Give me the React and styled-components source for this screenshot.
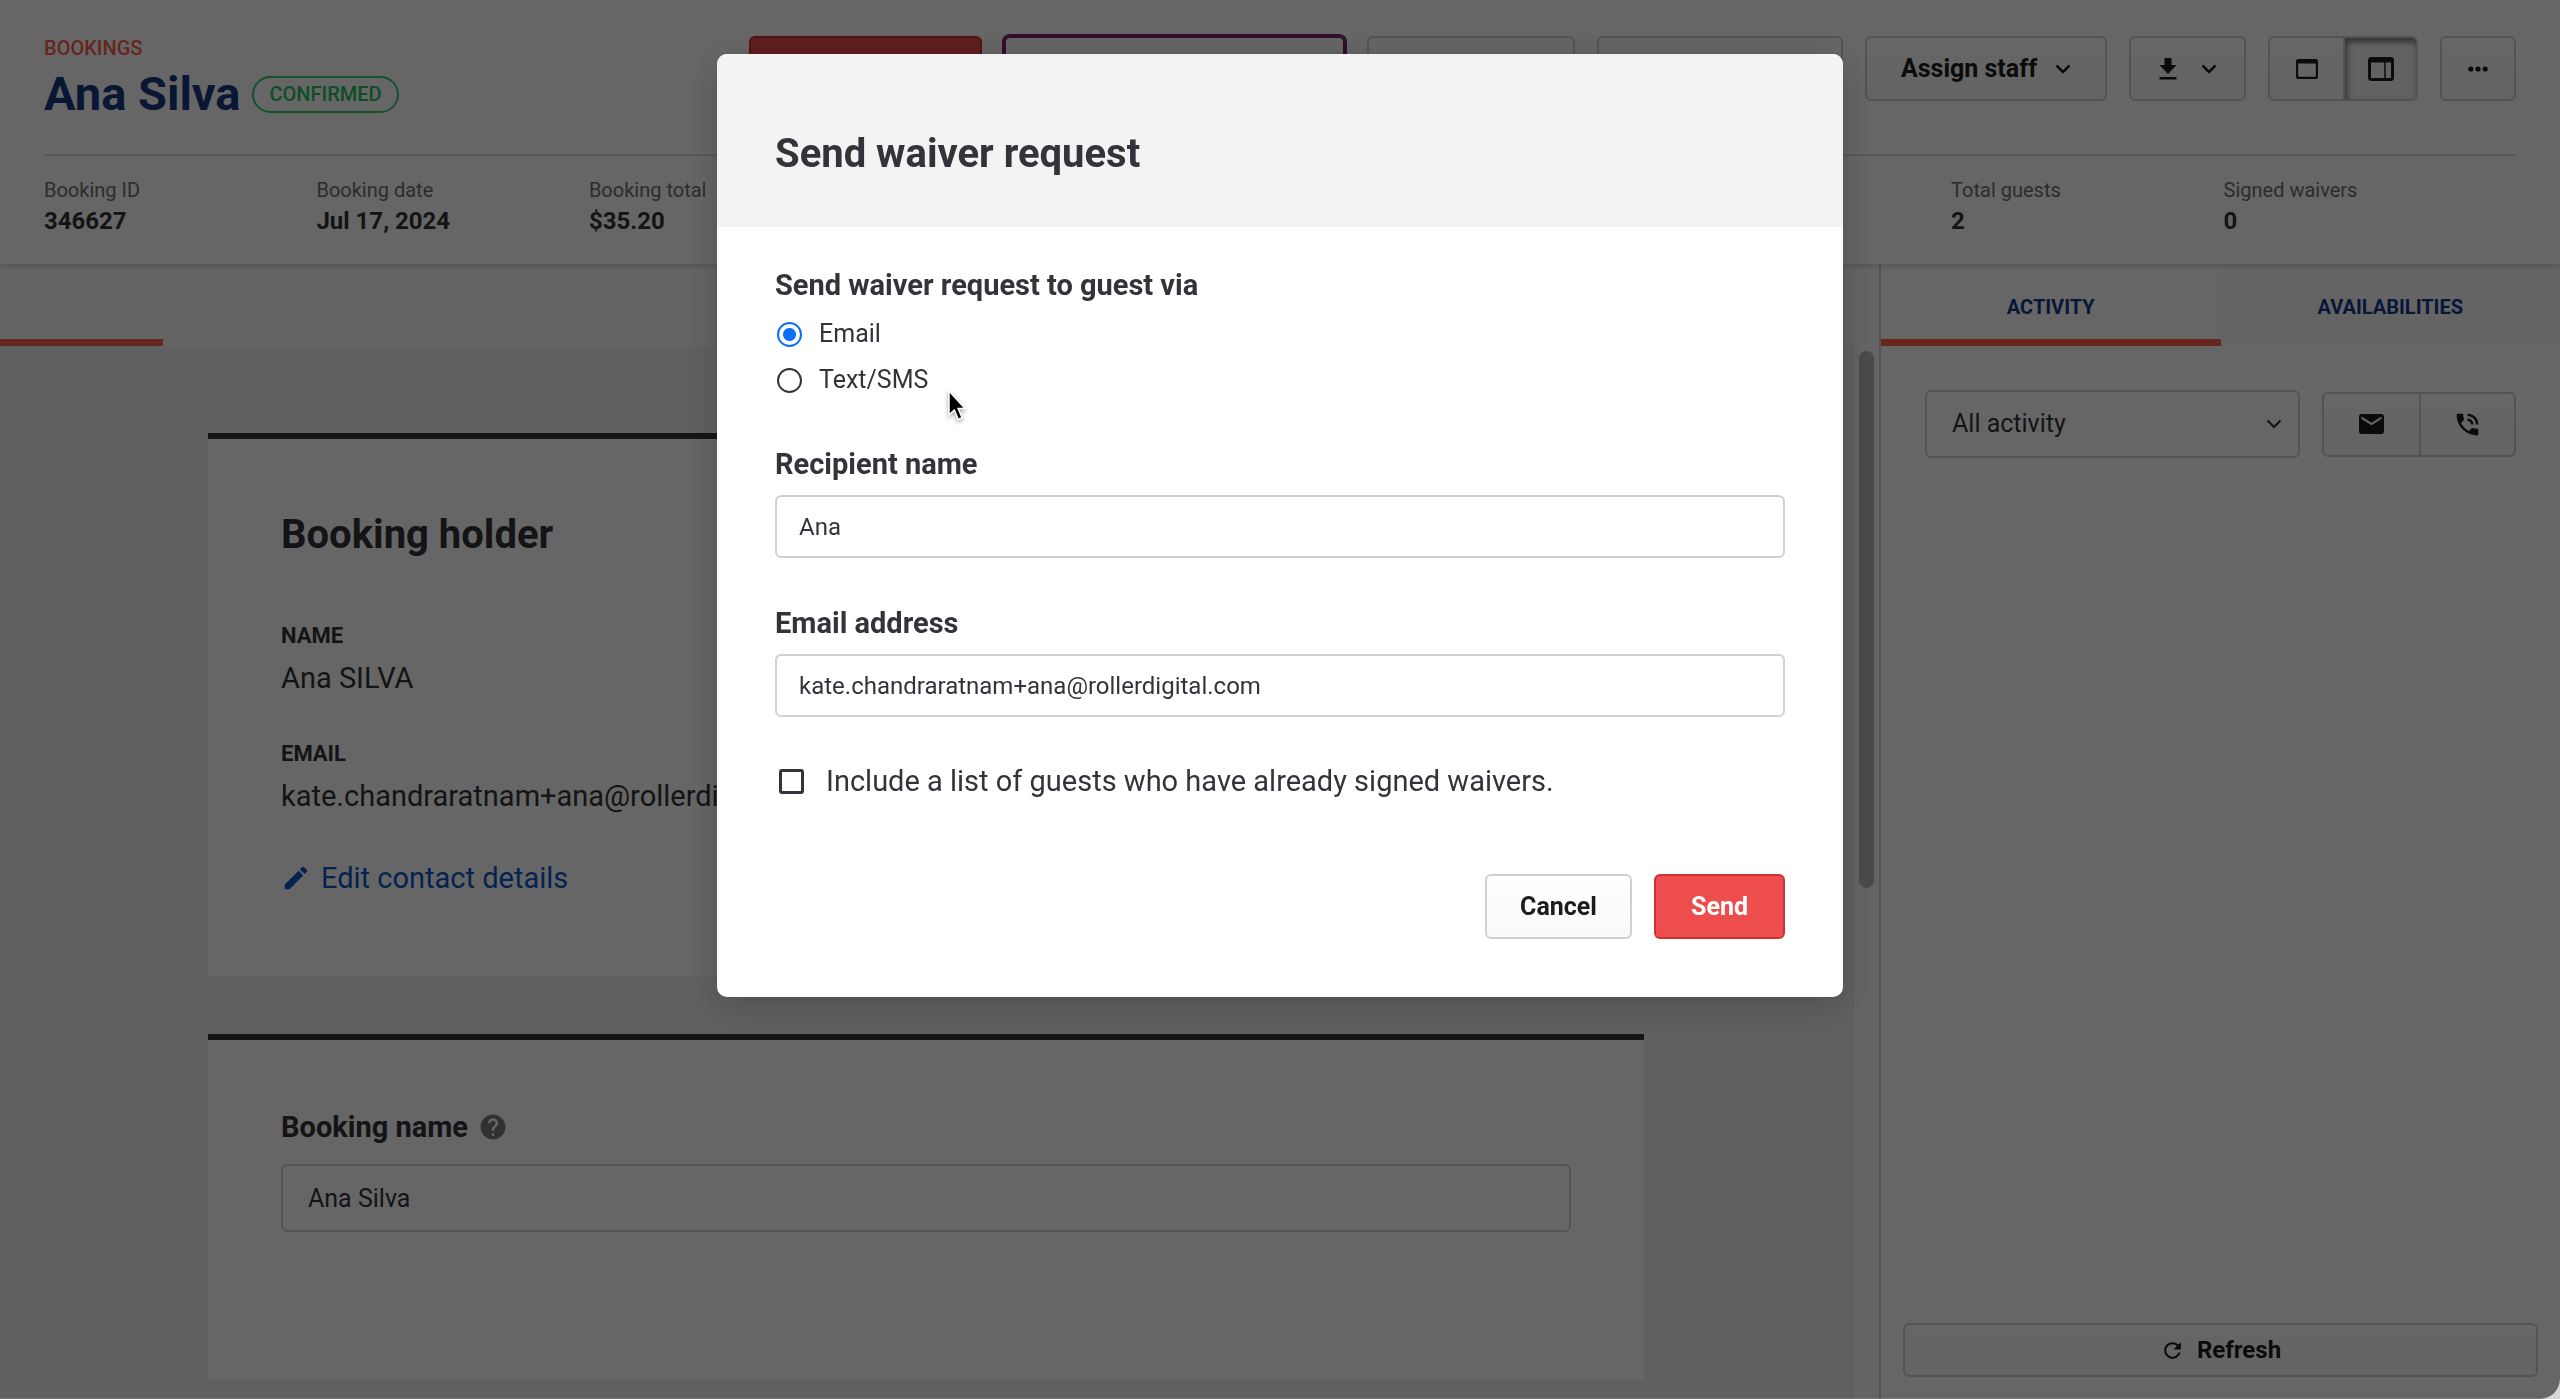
import React from "react";
import styled, { createGlobalStyle, css } from "styled-components";

const Global = createGlobalStyle`
  *, *::before, *::after { box-sizing: border-box; }
  html, body, #root { height: 100%; }
  body {
    margin: 0;
    background: #d6d6d6;
    color: #333439;
    font-family: Roboto, "Liberation Sans", sans-serif;
    font-size: 25px;
    line-height: 34px;
    overflow: hidden;
  }
  h1, h2, p, dl, dt, dd { margin: 0; }
  button, input, select { font: inherit; color: inherit; }
`;

const Page = styled.div`
  display: flex;
  flex-direction: column;
  height: 100vh;
  background: #fff;
  border-radius: 0 0 20px 0;
  overflow: hidden;
`;

/* Header */

const Header = styled.header`
  flex: none;
  padding: 36px 44px 0;
  height: 264px;
  background: #fff;
  box-shadow: 0 2px 6px rgba(0, 0, 0, 0.18);
  z-index: 1;
`;

const TitleRow = styled.div`
  display: flex;
  justify-content: space-between;
  align-items: flex-start;
  height: 120px;
  border-bottom: 2px solid #e0e0e0;
`;

const Crumb = styled.a`
  display: block;
  font-size: 20px;
  line-height: 24px;
  font-weight: 500;
  color: #ff5d4b;
  text-decoration: none;
`;

const NameLine = styled.div`
  display: flex;
  align-items: center;
  gap: 12px;
`;

const GuestName = styled.h1`
  font-size: 47px;
  line-height: 68px;
  font-weight: 700;
  color: #173a82;
`;

const StatusPill = styled.span`
  height: 37px;
  padding: 0 15px;
  border: 2px solid #2ecc71;
  border-radius: 19px;
  font-size: 20px;
  line-height: 33px;
  font-weight: 500;
  color: #25c165;
`;

const Toolbar = styled.div`
  display: flex;
  gap: 22px;
`;

const buttonFace = css`
  display: inline-flex;
  align-items: center;
  justify-content: center;
  gap: ${(p) => p.$gap || 16}px;
  height: 65px;
  padding: 0;
  border: 2px solid #d0d0d0;
  border-radius: 6px;
  background: linear-gradient(#fff, #f9f9f9);
  color: #1c1c1c;
  font-size: 25px;
  font-weight: 700;
`;

const Button = styled.button`
  ${buttonFace}
  width: ${(p) => p.$width}px;
  ${(p) =>
    p.$kind === "danger" &&
    css`
      background: #ee4d4d;
      border-color: #cc3434;
      color: #fff;
    `}
  ${(p) =>
    p.$kind === "accent" &&
    css`
      border-color: #7a1f66;
      box-shadow: 0 0 0 2px #7a1f66;
    `}
`;

const Segments = styled.div`
  display: flex;
`;

const Segment = styled.button`
  ${buttonFace}
  width: ${(p) => p.$width}px;
  &:first-child { border-radius: 6px 0 0 6px; border-right-width: 0; }
  &:last-child { border-radius: 0 6px 6px 0; }
  ${(p) =>
    p.$pressed &&
    css`
      background: #f6f6f6;
      box-shadow: inset 2px 4px 6px rgba(0, 0, 0, 0.5);
    `}
`;

const Facts = styled.dl`
  display: grid;
  grid-template-columns: repeat(9, 1fr);
  padding: 22px 20px 0 0;
`;

const Fact = styled.div`
  grid-column: ${(p) => p.$column};
`;

const FactLabel = styled.dt`
  font-size: 20px;
  line-height: 24px;
  color: #6f6f74;
`;

const FactValue = styled.dd`
  font-size: 24px;
  line-height: 38px;
  font-weight: 700;
`;

/* Body */

const Body = styled.div`
  flex: 1;
  min-height: 0;
  display: flex;
`;

const Main = styled.main`
  flex: 1;
  min-width: 0;
  display: flex;
  flex-direction: column;
`;

const TabBar = styled.div`
  flex: none;
  display: flex;
  height: 82px;
  background: #fafafa;
`;

const Tab = styled.button`
  width: ${(p) => (p.$wide ? "50%" : "163px")};
  padding: 10px 0 0;
  border: 0;
  border-bottom: 7px solid ${(p) => (p.$active ? "#ff604d" : "transparent")};
  background: ${(p) => (p.$active && p.$wide ? "#fff" : "transparent")};
  color: #16398a;
  font-size: 20px;
  line-height: 24px;
  font-weight: 700;
`;

const Scroller = styled.div`
  flex: 1;
  min-height: 0;
  display: flex;
`;

const Canvas = styled.div`
  flex: 1;
  display: flex;
  flex-direction: column;
  gap: 58px;
  padding: 87px 209px 0 208px;
  background: #edf0f5;
`;

const Track = styled.div`
  width: 26px;
  padding: 5px 5px 0;
  border-left: 1px solid #ececec;
  background: #fafafa;
`;

const Thumb = styled.div`
  height: 537px;
  border-radius: 8px;
  background: #bababa;
`;

const Card = styled.section`
  flex: none;
  padding: ${(p) => (p.$compact ? "70px 73px 148px" : "60px 73px 78px")};
  border-top: 6px solid #35363b;
  background: #fff;
`;

const CardTitle = styled.h2`
  margin-bottom: 45px;
  font-size: 40px;
  line-height: 72px;
  font-weight: 700;
`;

const Detail = styled.div`
  margin-bottom: 34px;
`;

const DetailLabel = styled.h3`
  margin: 0;
  font-size: 22px;
  line-height: 40px;
  font-weight: 700;
`;

const DetailValue = styled.p`
  font-size: 29px;
  line-height: 44px;
`;

const EditLink = styled.a`
  display: flex;
  align-items: center;
  gap: 10px;
  padding-top: 6px;
  font-size: 29px;
  line-height: 40px;
  color: #0a58ca;
  text-decoration: none;
`;

const LabelRow = styled.div`
  display: flex;
  align-items: center;
  gap: 10px;
  margin-bottom: 20px;
`;

const FieldLabel = styled.label`
  display: block;
  font-size: 29px;
  line-height: 34px;
  font-weight: 700;
`;

const TextInput = styled.input`
  display: block;
  width: 100%;
  height: ${(p) => (p.$large ? 68 : 63)}px;
  padding: ${(p) => (p.$large ? "0 25px" : "0 22px")};
  border: 2px solid #d0d0d0;
  border-radius: 6px;
  background: #fff;
  font-size: ${(p) => (p.$large ? 25 : 24)}px;
  outline: 0;
`;

/* Side panel */

const Side = styled.aside`
  width: 681px;
  display: flex;
  flex-direction: column;
  border-left: 2px solid #d2d2d2;
  background: #fff;
`;

const Filters = styled.div`
  display: flex;
  align-items: center;
  gap: 22px;
  padding: 44px 44px 0;
`;

const SelectBox = styled.div`
  flex: 1;
  display: grid;
  align-items: center;
  & > * { grid-area: 1 / 1; }
  & > svg { justify-self: end; margin-right: 18px; pointer-events: none; }
`;

const Select = styled.select`
  appearance: none;
  width: 100%;
  height: 68px;
  padding: 0 25px;
  border: 2px solid #d0d0d0;
  border-radius: 6px;
  background: #fff;
  font-size: 25px;
`;

const SideFooter = styled.div`
  margin-top: auto;
  padding: 0 22px 22px;
`;

const RefreshButton = styled.button`
  ${buttonFace}
  width: 100%;
  height: 54px;
  gap: 12px;
  font-size: 24px;
`;

/* Dialog */

const Backdrop = styled.div`
  position: fixed;
  inset: 0;
  z-index: 2;
  display: flex;
  justify-content: center;
  align-items: flex-start;
  padding-top: 54px;
  background: rgba(0, 0, 0, 0.6);
  border-bottom: 1px solid rgba(255, 255, 255, 0.15);
  border-radius: 0 0 20px 0;
`;

const Dialog = styled.form`
  width: 1126px;
  border-radius: 10px;
  overflow: hidden;
  background: #fff;
  box-shadow: 0 8px 36px rgba(0, 0, 0, 0.2);
`;

const DialogHeader = styled.div`
  padding: 76px 58px 49px;
  background: #f3f3f3;
`;

const DialogTitle = styled.h2`
  font-size: 40px;
  line-height: 48px;
  font-weight: 700;
`;

const DialogBody = styled.div`
  padding: 41px 58px 58px;
`;

const Fieldset = styled.fieldset`
  margin: 0 0 44px;
  padding: 0;
  border: 0;
`;

const Legend = styled.legend`
  margin-bottom: 9px;
  padding: 0;
  font-size: 29px;
  line-height: 34px;
  font-weight: 700;
`;

const Choice = styled.label`
  display: flex;
  align-items: center;
  gap: 17px;
  padding-left: 2px;
  height: 46px;
  font-size: 25px;
`;

const Radio = styled.input`
  appearance: none;
  width: 25px;
  height: 25px;
  margin: 0;
  border: 2px solid #333439;
  border-radius: 50%;
  &:checked {
    border-color: #0d6efd;
    background: radial-gradient(circle, #0d6efd 0 6px, #fff 7px);
  }
`;

const Field = styled.div`
  display: flex;
  flex-direction: column;
  gap: 14px;
  margin-bottom: 48px;
`;

const CheckRow = styled.label`
  display: flex;
  align-items: center;
  gap: 22px;
  padding-left: 4px;
  font-size: 29px;
  line-height: 32px;
`;

const Checkbox = styled.input`
  appearance: none;
  width: 25px;
  height: 25px;
  margin: 0;
  border: 3px solid #333439;
  border-radius: 3px;
`;

const Actions = styled.div`
  display: flex;
  justify-content: flex-end;
  gap: 22px;
  margin-top: 77px;
`;

const Pointer = styled.svg`
  position: fixed;
  left: 946px;
  top: 388px;
  z-index: 3;
  filter: drop-shadow(0 2px 2px rgba(0, 0, 0, 0.35));
`;

/* Icons */

const Chevron = ({ width = 2.5 }) => (
  <svg width="16" height="16" viewBox="0 0 16 16" fill="none" stroke="currentColor" strokeWidth={width}>
    <path d="M1.500 4.500l6.500 6.500 6.500-6.500" />
  </svg>
);

const DownloadIcon = () => (
  <svg width="18" height="22" viewBox="0 0 18 22" fill="currentColor">
    <path d="M5.500 0h7v7H17.500L9 16 .500 7H5.500zM.500 19h17v2.500H.500z" />
  </svg>
);

const WindowIcon = () => (
  <svg width="22" height="20" viewBox="0 0 22 20" fill="none" stroke="currentColor">
    <rect x="1.100" y="1.100" width="19.800" height="17.800" rx="1.500" strokeWidth="2.200" />
    <path d="M1 2.500h20" strokeWidth="4" />
  </svg>
);

const SplitIcon = () => (
  <svg width="26" height="24" viewBox="0 0 26 24" fill="none" stroke="currentColor">
    <rect x="1.500" y="1.500" width="23" height="21" rx="2" strokeWidth="3" />
    <path d="M1 3h24" strokeWidth="5" />
    <path d="M17 5v17" strokeWidth="1.500" />
  </svg>
);

const MoreIcon = () => (
  <svg width="20" height="6" viewBox="0 0 20 6" fill="currentColor">
    <circle cx="2.800" cy="3" r="2.600" />
    <circle cx="10" cy="3" r="2.600" />
    <circle cx="17.200" cy="3" r="2.600" />
  </svg>
);

const MailIcon = () => (
  <svg width="25" height="20" viewBox="2 4 20 16" fill="currentColor">
    <path d="M20 4H4c-1.100 0-1.990.9-1.990 2L2 18c0 1.100.9 2 2 2h16c1.100 0 2-.9 2-2V6c0-1.100-.9-2-2-2zm0 4l-8 5-8-5V6l8 5 8-5v2z" />
  </svg>
);

const CallIcon = () => (
  <svg width="29" height="29" viewBox="0 0 24 24" fill="currentColor">
    <path d="M20 15.500c-1.250 0-2.450-.2-3.570-.57a1.020 1.020 0 0 0-1.020.24l-2.200 2.200a15.074 15.074 0 0 1-6.590-6.590l2.200-2.210c.28-.26.36-.65.25-1A11.360 11.360 0 0 1 8.500 4c0-.55-.45-1-1-1H4c-.55 0-1 .45-1 1 0 9.390 7.610 17 17 17 .55 0 1-.45 1-1v-3.500c0-.55-.45-1-1-1zM19 12h2a9 9 0 0 0-9-9v2c3.870 0 7 3.130 7 7zm-4 0h2c0-2.760-2.240-5-5-5v2c1.660 0 3 1.340 3 3z" />
  </svg>
);

const PencilIcon = () => (
  <svg width="30" height="30" viewBox="0 0 24 24" fill="currentColor">
    <path d="M3 17.250V21h3.750L17.810 9.940l-3.750-3.750L3 17.250zM20.710 7.040a1 1 0 0 0 0-1.410l-2.340-2.340a1 1 0 0 0-1.410 0l-1.830 1.830 3.750 3.750 1.830-1.830z" />
  </svg>
);

const HelpIcon = () => (
  <svg width="30" height="30" viewBox="0 0 24 24" fill="#7a7a80">
    <path d="M12 2C6.480 2 2 6.480 2 12s4.480 10 10 10 10-4.480 10-10S17.520 2 12 2zm1 17h-2v-2h2v2zm2.070-7.750l-.9.920C13.450 12.900 13 13.500 13 15h-2v-.5c0-1.100.45-2.100 1.170-2.830l1.240-1.260c.37-.36.59-.86.59-1.410 0-1.100-.9-2-2-2s-2 .9-2 2H8c0-2.210 1.790-4 4-4s4 1.790 4 4c0 .88-.36 1.680-.93 2.250z" />
  </svg>
);

const RefreshIcon = () => (
  <svg width="25" height="25" viewBox="0 0 24 24" fill="currentColor">
    <path d="M17.650 6.350A7.958 7.958 0 0 0 12 4a8 8 0 1 0 7.730 10h-2.080A6 6 0 1 1 12 6c1.660 0 3.140.69 4.220 1.780L13 11h7V4l-2.350 2.350z" />
  </svg>
);

const FACTS = [
  ["Booking ID", "346627", 1],
  ["Booking date", "Jul 17, 2024", 2],
  ["Booking total", "$35.20", 3],
  ["Total guests", "2", 8],
  ["Signed waivers", "0", 9],
];

function BookingHeader() {
  return (
    <Header>
      <TitleRow>
        <div>
          <Crumb href="#bookings">BOOKINGS</Crumb>
          <NameLine>
            <GuestName>Ana Silva</GuestName>
            <StatusPill>CONFIRMED</StatusPill>
          </NameLine>
        </div>
        <Toolbar>
          <Button $width={233} $kind="danger" aria-label="Check in" />
          <Button $width={341} $kind="accent" aria-label="Send waiver request" />
          <Button $width={208} aria-label="Receipt" />
          <Button $width={246} aria-label="Add payment" />
          <Button $width={242} $gap={18}>
            Assign staff <Chevron />
          </Button>
          <Button $width={117} $gap={24} aria-label="Download">
            <DownloadIcon />
            <Chevron />
          </Button>
          <Segments>
            <Segment $width={75} aria-label="Single view">
              <WindowIcon />
            </Segment>
            <Segment $width={75} $pressed aria-label="Split view" aria-pressed="true">
              <SplitIcon />
            </Segment>
          </Segments>
          <Button $width={76} aria-label="More">
            <MoreIcon />
          </Button>
        </Toolbar>
      </TitleRow>
      <Facts>
        {FACTS.map(([label, value, column]) => (
          <Fact key={label} $column={column}>
            <FactLabel>{label}</FactLabel>
            <FactValue>{value}</FactValue>
          </Fact>
        ))}
      </Facts>
    </Header>
  );
}

function BookingDetails() {
  return (
    <Main>
      <TabBar>
        <Tab $active aria-label="Details" />
      </TabBar>
      <Scroller>
        <Canvas>
          <Card>
            <CardTitle>Booking holder</CardTitle>
            <Detail>
              <DetailLabel>NAME</DetailLabel>
              <DetailValue>Ana SILVA</DetailValue>
            </Detail>
            <Detail>
              <DetailLabel>EMAIL</DetailLabel>
              <DetailValue>kate.chandraratnam+ana@rollerdigital.com</DetailValue>
            </Detail>
            <EditLink href="#edit">
              <PencilIcon />
              Edit contact details
            </EditLink>
          </Card>
          <Card $compact>
            <LabelRow>
              <FieldLabel htmlFor="booking-name">Booking name</FieldLabel>
              <HelpIcon />
            </LabelRow>
            <TextInput $large id="booking-name" defaultValue="Ana Silva" />
          </Card>
        </Canvas>
        <Track>
          <Thumb />
        </Track>
      </Scroller>
    </Main>
  );
}

function ActivityPanel() {
  return (
    <Side>
      <TabBar>
        <Tab $wide $active>ACTIVITY</Tab>
        <Tab $wide>AVAILABILITIES</Tab>
      </TabBar>
      <Filters>
        <SelectBox>
          <Select aria-label="Activity filter" defaultValue="all">
            <option value="all">All activity</option>
          </Select>
          <Chevron width={2} />
        </SelectBox>
        <Segments>
          <Segment $width={97} aria-label="Send email">
            <MailIcon />
          </Segment>
          <Segment $width={97} aria-label="Log call">
            <CallIcon />
          </Segment>
        </Segments>
      </Filters>
      <SideFooter>
        <RefreshButton>
          <RefreshIcon />
          Refresh
        </RefreshButton>
      </SideFooter>
    </Side>
  );
}

function WaiverDialog() {
  return (
    <Backdrop>
      <Dialog role="dialog" aria-labelledby="waiver-title" onSubmit={(e) => e.preventDefault()}>
        <DialogHeader>
          <DialogTitle id="waiver-title">Send waiver request</DialogTitle>
        </DialogHeader>
        <DialogBody>
          <Fieldset>
            <Legend>Send waiver request to guest via</Legend>
            <Choice>
              <Radio type="radio" name="via" defaultChecked />
              Email
            </Choice>
            <Choice>
              <Radio type="radio" name="via" />
              Text/SMS
            </Choice>
          </Fieldset>
          <Field>
            <FieldLabel htmlFor="recipient">Recipient name</FieldLabel>
            <TextInput id="recipient" defaultValue="Ana" />
          </Field>
          <Field>
            <FieldLabel htmlFor="email">Email address</FieldLabel>
            <TextInput id="email" type="email" defaultValue="kate.chandraratnam+ana@rollerdigital.com" />
          </Field>
          <CheckRow>
            <Checkbox type="checkbox" />
            Include a list of guests who have already signed waivers.
          </CheckRow>
          <Actions>
            <Button type="button" $width={147}>Cancel</Button>
            <Button type="submit" $width={131} $kind="danger">Send</Button>
          </Actions>
        </DialogBody>
      </Dialog>
    </Backdrop>
  );
}

export default function App() {
  return (
    <>
      <Global />
      <Page>
        <BookingHeader />
        <Body>
          <BookingDetails />
          <ActivityPanel />
        </Body>
      </Page>
      <WaiverDialog />
      <Pointer width="20" height="34" viewBox="0 0 20 34" aria-hidden="true">
        <path
          d="M3 3v24l5.300-5 4 9.500 3.800-1.700-4-9.300H19z"
          fill="#000"
          stroke="#fff"
          strokeWidth="1.500"
        />
      </Pointer>
    </>
  );
}
